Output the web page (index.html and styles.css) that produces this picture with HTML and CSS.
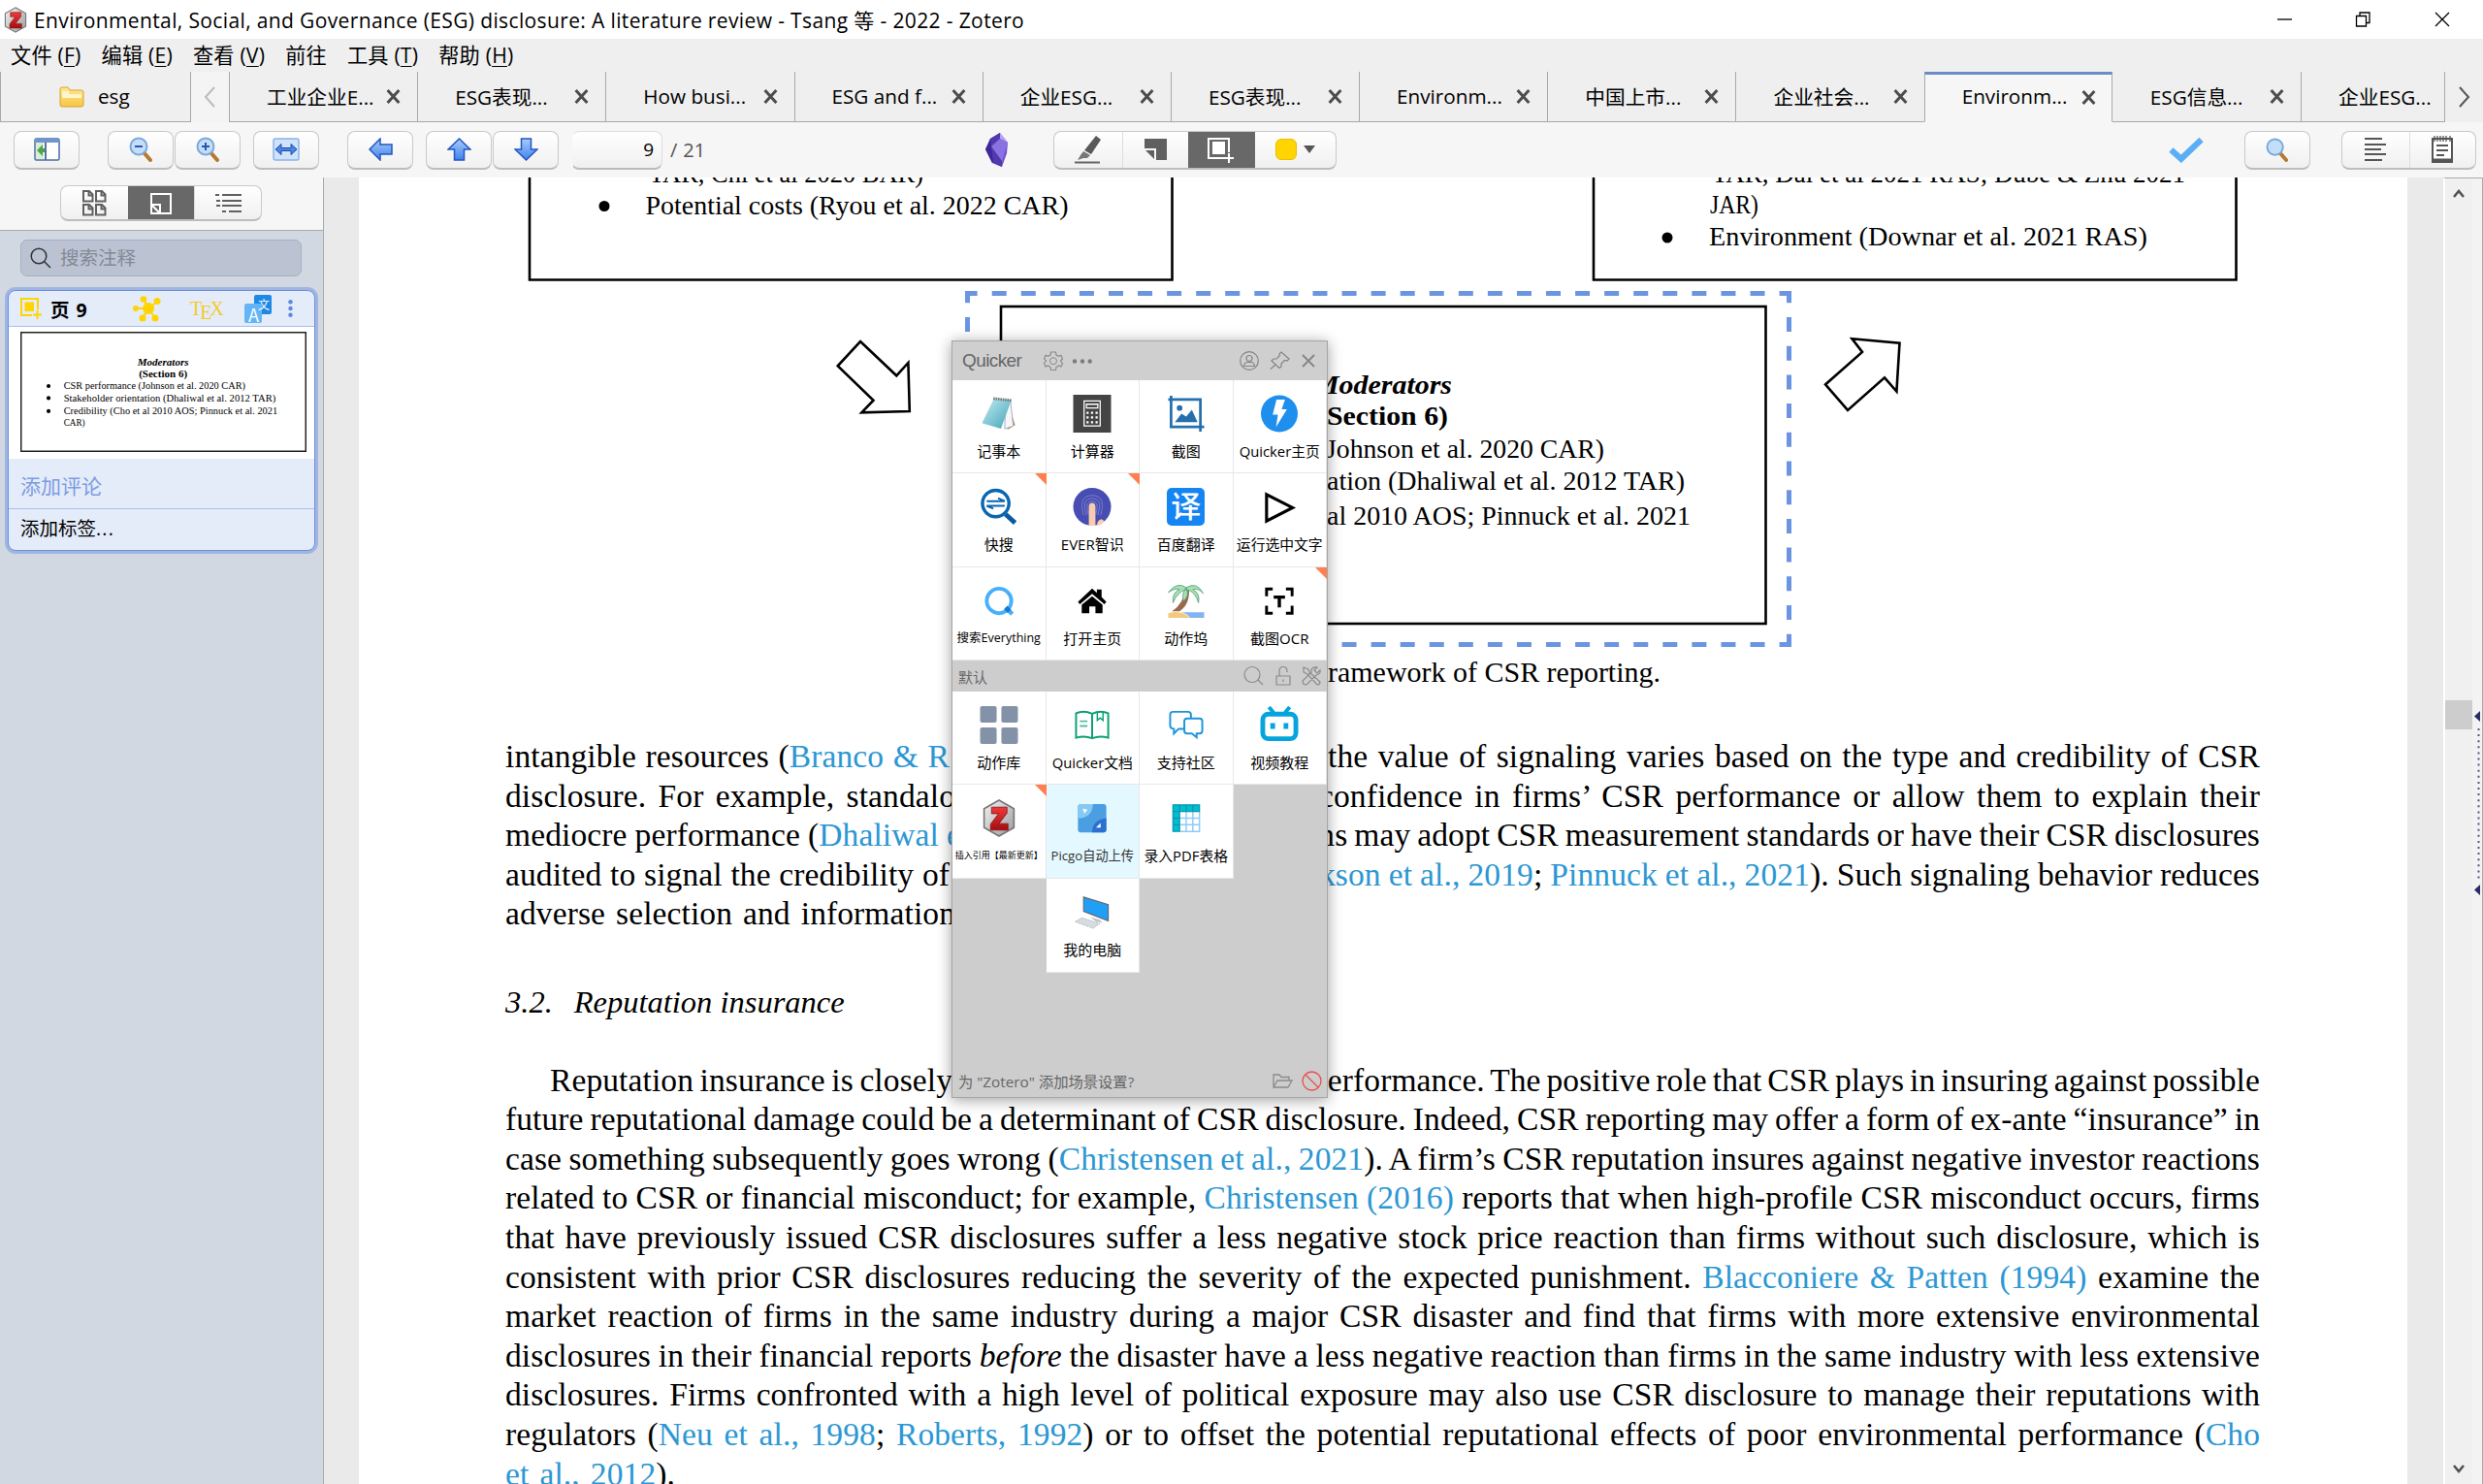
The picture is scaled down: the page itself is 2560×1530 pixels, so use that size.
FILE: index.html
```
<!DOCTYPE html>
<html lang="zh-CN">
<head>
<meta charset="utf-8">
<title>Zotero</title>
<link rel="stylesheet" href="styles.css">
</head>
<body>
<svg class="defs" width="0" height="0">
  <defs>
    <linearGradient id="blue" x1="0" y1="0" x2="0" y2="1"><stop offset="0" stop-color="#a9cdfb"/><stop offset="1" stop-color="#3f82ea"/></linearGradient>
    <linearGradient id="red" x1="0" y1="0" x2="0" y2="1"><stop offset="0" stop-color="#ee3a3a"/><stop offset="1" stop-color="#a30d12"/></linearGradient>
    <linearGradient id="silver" x1="0" y1="0" x2="1" y2="1"><stop offset="0" stop-color="#f4f4f4"/><stop offset="1" stop-color="#9b9b9b"/></linearGradient>
    <linearGradient id="folder" x1="0" y1="0" x2="0" y2="1"><stop offset="0" stop-color="#ffe98f"/><stop offset="1" stop-color="#f6c544"/></linearGradient>
    <linearGradient id="pad" x1="0" y1="0" x2="1" y2="1"><stop offset="0" stop-color="#c9eef3"/><stop offset="1" stop-color="#3fa3b8"/></linearGradient>
    <symbol id="x" viewBox="0 0 14 14"><path d="M1.500 1 12.500 13M12.500 1 1.500 13" stroke="#4c4c4c" stroke-width="2.800" fill="none"/></symbol>
    <symbol id="z" viewBox="0 0 34 38"><path d="M17 1 32 9.500V28.500L17 37 2 28.500V9.500Z" fill="url(#silver)" stroke="#777" stroke-width="1.600"/><path d="M9.500 8H25V14L17 24.500H26V31H8.500V25L16.500 14.500H9.500Z" fill="url(#red)" stroke="#8d1014" stroke-width=".8"/></symbol>
    <symbol id="lens" viewBox="0 0 26 26"><path d="M15.500 16 22.500 24" stroke="#b87830" stroke-width="4" stroke-linecap="round"/><circle cx="10.500" cy="10" r="8.500" fill="#c4def8" stroke="#7ba7dd" stroke-width="2"/></symbol>
    <symbol id="glass" viewBox="0 0 22 22"><circle cx="9" cy="9" r="7.800" fill="none" stroke="currentColor" stroke-width="1.500"/><path d="M14.500 14.500 21 21" stroke="currentColor" stroke-width="1.500"/></symbol>
  </defs>
</svg>

<header class="titlebar">
  <svg class="app" viewBox="0 0 34 38"><use href="#z"/></svg>
  <span class="window-title">Environmental, Social, and Governance (ESG) disclosure: A literature review - Tsang 等 - 2022 - Zotero</span>
  <svg class="winbtns" viewBox="0 0 180 16" fill="none" stroke="#000" stroke-width="1.300"><path d="M1 8H16"/><path d="M82.500 4.500H92.500V15H82.500ZM86 4V1H96V11.500H93"/><path d="M164 1 178 15M178 1 164 15"/></svg>
</header>
<nav class="menubar"><span>文件 (<u>F</u>)</span><span>编辑 (<u>E</u>)</span><span>查看 (<u>V</u>)</span><span>前往</span><span>工具 (<u>T</u>)</span><span>帮助 (<u>H</u>)</span></nav>

<div class="tabs">
  <div class="tab home"><svg width="26" height="22" viewBox="0 0 26 22"><path d="M1 3Q1 1 3 1H9L11 4H23Q25 4 25 6V19Q25 21 23 21H3Q1 21 1 19Z" fill="url(#folder)" stroke="#d9a431"/><path d="M3 5H10V8H23V12H3Z" fill="#fff6cc"/></svg><span>esg</span></div>
  <div class="scroll left"><svg width="12" height="22" viewBox="0 0 12 22"><path d="M11 1 2 11 11 21" fill="none" stroke="#bbb" stroke-width="2"/></svg></div>
  <div class="tab"><span>工业企业E...</span><svg class="x"><use href="#x"/></svg></div>
  <div class="tab"><span>ESG表现...</span><svg class="x"><use href="#x"/></svg></div>
  <div class="tab"><span>How busi...</span><svg class="x"><use href="#x"/></svg></div>
  <div class="tab"><span>ESG and f...</span><svg class="x"><use href="#x"/></svg></div>
  <div class="tab"><span>企业ESG...</span><svg class="x"><use href="#x"/></svg></div>
  <div class="tab"><span>ESG表现...</span><svg class="x"><use href="#x"/></svg></div>
  <div class="tab"><span>Environm...</span><svg class="x"><use href="#x"/></svg></div>
  <div class="tab"><span>中国上市...</span><svg class="x"><use href="#x"/></svg></div>
  <div class="tab"><span>企业社会...</span><svg class="x"><use href="#x"/></svg></div>
  <div class="tab active"><span>Environm...</span><svg class="x"><use href="#x"/></svg></div>
  <div class="tab"><span>ESG信息...</span><svg class="x"><use href="#x"/></svg></div>
  <div class="tab last"><span>企业ESG...</span></div>
  <div class="scroll right"><svg width="12" height="22" viewBox="0 0 12 22"><path d="M1 1 10 11 1 21" fill="none" stroke="#555" stroke-width="2"/></svg></div>
</div>

<div class="toolbar">
  <div class="btn"><svg width="27" height="24" viewBox="0 0 27 24"><rect x="1" y="1" width="25" height="22" rx="1.500" fill="#fff" stroke="#4a6fa5" stroke-width="1.500"/><path d="M1 1H26V5H1Z" fill="#6f95cc"/><path d="M2 5H10V22H2Z" fill="#dcebd6"/><path d="M12 5V23" stroke="#53749f" stroke-width="2"/><path d="M3 13 9 7V11H11V15H9V19Z" fill="#4aa64a"/></svg></div>
  <div class="btn gap29"><svg width="27" height="26" viewBox="0 0 26 26"><use href="#lens"/><path d="M6.500 10H14.500" stroke="#2b55b5" stroke-width="2"/></svg></div>
  <div class="btn gap1"><svg width="27" height="26" viewBox="0 0 26 26"><use href="#lens"/><path d="M6.500 10H14.500M10.500 6V14" stroke="#2b55b5" stroke-width="2"/></svg></div>
  <div class="btn gap13"><svg width="28" height="24" viewBox="0 0 28 24"><rect x="1" y="1" width="26" height="22" rx="2" fill="#cfe3fb" stroke="#8cb4e8" stroke-width="1.500"/><path d="M3 12 9 6.500V10.500H19V6.500L25 12 19 17.500V13.500H9V17.500Z" fill="#4a86e0" stroke="#1f4cad"/></svg></div>
  <div class="btn gap29"><svg width="25" height="24" viewBox="0 0 25 24"><path d="M1 12 12 1V7H24V17H12V23Z" fill="url(#blue)" stroke="#2355c4" stroke-width="1.500"/></svg></div>
  <div class="btn gap13"><svg width="25" height="24" viewBox="0 0 25 24"><path d="M12.500 1 24 12H17.500V23H7.500V12H1Z" fill="url(#blue)" stroke="#2355c4" stroke-width="1.500"/></svg></div>
  <div class="btn gap1"><svg width="25" height="24" viewBox="0 0 25 24"><path d="M12.500 23 24 12H17.500V1H7.500V12H1Z" fill="url(#blue)" stroke="#2355c4" stroke-width="1.500"/></svg></div>
  <div class="page-input">9</div><span class="total">/ 21</span>
  <svg class="obsidian" viewBox="0 0 23 35"><path d="M15 0 5 6 0 17 7 31 17 35 22 21 23 10Z" fill="#6c50cf"/><path d="M15 0 5 6 0 17 7 31 9 30 6 14Z" fill="#3f2797"/><path d="M15 0 15 6 6 14 5 7Z" fill="#523aae"/><path d="M15 0 23 10 15 6Z" fill="#b7a4f2"/><path d="M6 14 15 6 23 10 17 30Z" fill="#8b72e2"/><path d="M6 14 8 31 17 35 17 29Z" fill="#503aad"/></svg>
  <div class="group tools">
    <div><svg width="29" height="29" viewBox="0 0 29 29"><path d="M1 27.500H27" stroke="#666" stroke-width="2"/><path d="M23 0 28 4 18 19 11 15Z" fill="#595959"/><path d="M10 16 17 20 14 23H10L4 25 7 20Z" fill="#777"/></svg></div>
    <div><svg width="23" height="22" viewBox="0 0 23 22"><path d="M0 0H23V22H12V10H0Z" fill="#606060"/><path d="M1 12H10V21Z" fill="#606060"/></svg></div>
    <div class="dark"><svg width="28" height="26" viewBox="0 0 28 26"><path d="M22 15V1H1V21H18" fill="none" stroke="#fff" stroke-width="2"/><rect x="5" y="4" width="13" height="13" fill="#fff"/><path d="M22 16V26M17 21H27" stroke="#fff" stroke-width="2"/></svg></div>
    <div class="color"><i></i><b></b></div>
  </div>
  <svg class="check" viewBox="0 0 34 26"><path d="M2 13 12 22 32 3" fill="none" stroke="#5aaef5" stroke-width="6"/></svg>
  <div class="btn find"><svg width="26" height="25" viewBox="0 0 26 26"><use href="#lens"/></svg></div>
  <div class="group side">
    <div><svg width="22" height="24" viewBox="0 0 22 24"><path d="M0 1H18M0 7H22M0 12H17M0 17H22M0 23H18" stroke="#555" stroke-width="1.800"/></svg></div>
    <div><svg width="24" height="28" viewBox="0 0 24 28"><path d="M2 3H22V27H2Z" fill="#fff" stroke="#555" stroke-width="2"/><path d="M2 25H22" stroke="#555" stroke-width="3"/><path d="M4 0V6M7 0V6M10 0V6M13 0V6M16 0V6M20 0V6" stroke="#555" stroke-width="1.300"/><path d="M6 10H18M6 15H18M6 20H14" stroke="#555" stroke-width="1.800"/></svg></div>
  </div>
</div>

<div class="main">
  <aside class="sidebar">
    <div class="side-head"><div class="group views">
      <div><svg width="25" height="27" viewBox="0 0 25 27" fill="none" stroke="#606060" stroke-width="2"><path id="pg" d="M1 1H7L10.500 4.500V11.500H1ZM6.500 1.500V5.500H10"/><use href="#pg" x="13"/><use href="#pg" y="14"/><use href="#pg" x="13" y="14"/></svg></div>
      <div class="dark"><svg width="22" height="22" viewBox="0 0 22 22"><path d="M1 1H21V21H1Z" fill="none" stroke="#fff" stroke-width="2"/><path d="M2 12H10V20M2 13 9 20" fill="none" stroke="#fff" stroke-width="2"/></svg></div>
      <div><svg width="27" height="19" viewBox="0 0 27 19"><path d="M7 1H27M7 7H27M7 12H27M14 18H27M0 1H4M1 7H5M1 12H5M7 18H11" stroke="#606060" stroke-width="1.800"/></svg></div>
    </div></div>
    <div class="search"><svg width="22" height="22"><use href="#glass"/></svg><span>搜索注释</span></div>
    <div class="card">
      <div class="card-head">
        <svg width="22" height="22" viewBox="0 0 22 22"><path d="M18 12V1H1V18H12" fill="none" stroke="#ffd400" stroke-width="2"/><path d="M4.500 4.500H14V14H4.500Z" fill="#ffd400"/><path d="M17.500 13V22M13 17.500H22" stroke="#ffd400" stroke-width="2"/></svg>
        <strong>页 <em>9</em></strong>
        <svg class="net" width="29" height="27" viewBox="0 0 29 27"><path d="M16 13 4 13M16 13 11 3M16 13 25 6M16 13 10 23M16 13 23 23" stroke="#ffd400" stroke-width="1.800"/><g fill="#ffd400"><circle cx="16" cy="13" r="6"/><circle cx="3" cy="13" r="3"/><circle cx="11" cy="3.500" r="3.300"/><circle cx="25" cy="5.500" r="3.500"/><circle cx="10" cy="23" r="3.500"/><circle cx="23" cy="23" r="3.500"/></g></svg>
        <span class="tex">T<i>E</i>X</span>
        <span class="translate"><svg width="28" height="29" viewBox="0 0 28 29"><rect x="10" width="18" height="20" rx="2" fill="#1e88e5"/><rect y="9" width="18" height="20" rx="2" fill="#64b5f6"/></svg><b>文</b><i>A</i></span>
        <svg class="dots" width="5" height="18" viewBox="0 0 5 18" fill="#5c87de"><circle cx="2.500" cy="2.300" r="2.200"/><circle cx="2.500" cy="9" r="2.200"/><circle cx="2.500" cy="15.700" r="2.200"/></svg>
      </div>
      <div class="thumb"><svg viewBox="1030 314 792 330" preserveAspectRatio="none">
        <rect x="1032" y="316" width="788" height="326" fill="#fff" stroke="#222" stroke-width="4"/>
        <g class="figtext"><text x="1354" y="406" class="bi" textLength="142" lengthAdjust="spacingAndGlyphs">Moderators</text><text x="1358" y="438" class="bo" textLength="134" lengthAdjust="spacingAndGlyphs">(Section 6)</text><text x="1150" y="472" textLength="503" lengthAdjust="spacingAndGlyphs">CSR performance (Johnson et al. 2020 CAR)</text><text x="1150" y="505" textLength="587" lengthAdjust="spacingAndGlyphs">Stakeholder orientation (Dhaliwal et al. 2012 TAR)</text><text x="1150" y="541" textLength="592" lengthAdjust="spacingAndGlyphs">Credibility (Cho et al 2010 AOS; Pinnuck et al. 2021</text><text x="1150" y="573" textLength="59" lengthAdjust="spacingAndGlyphs">CAR)</text></g>
        <circle cx="1108" cy="463" r="5.500"/><circle cx="1108" cy="496" r="5.500"/><circle cx="1108" cy="532" r="5.500"/>
      </svg></div>
      <div class="comment">添加评论</div>
      <div class="tag">添加标签<span>...</span></div>
    </div>
  </aside>

  <main class="viewer">
    <article class="page">
      <svg class="figure" width="2112" height="577" viewBox="370 183 2112 577">
        <g fill="none" stroke="#000" stroke-width="2.600"><path d="M546 180V288.500H1208.500V180M1643 180V288.500H2305.500V180"/><rect x="1032" y="316" width="788.500" height="327"/><path d="M887 352 924.300 387.300 936.400 374 937.800 424 888.400 425.300 900.500 412.700 863.700 377.300Z"/><path d="M1909.500 349.300 1958.500 353.600 1955.400 403.600 1943 389.300 1905 422.900 1882 396.400 1920 362.900Z"/></g>
        <g class="figtext">
          <text x="669" y="188" textLength="283" lengthAdjust="spacingAndGlyphs">TAR, Chi et al 2020 BAR)</text>
          <text x="665.500" y="220.700" textLength="436" lengthAdjust="spacingAndGlyphs">Potential costs (Ryou et al. 2022 CAR)</text>
          <text x="1765" y="188" textLength="488" lengthAdjust="spacingAndGlyphs">TAR, Dai et al 2021 RAS; Dube &amp; Zhu 2021</text>
          <text x="1763" y="220" textLength="50" lengthAdjust="spacingAndGlyphs">JAR)</text>
          <text x="1762" y="253" textLength="452" lengthAdjust="spacingAndGlyphs">Environment (Downar et al. 2021 RAS)</text>
          <text x="1354" y="406" class="bi" textLength="143" lengthAdjust="spacingAndGlyphs">Moderators</text>
          <text x="1358" y="438" class="bo" textLength="135" lengthAdjust="spacingAndGlyphs">(Section 6)</text>
          <text x="1367" y="472" textLength="287" lengthAdjust="spacingAndGlyphs">Johnson et al. 2020 CAR)</text>
          <text x="1368" y="505" textLength="369" lengthAdjust="spacingAndGlyphs">ation (Dhaliwal et al. 2012 TAR)</text>
          <text x="1368" y="541" textLength="375" lengthAdjust="spacingAndGlyphs">al 2010 AOS; Pinnuck et al. 2021</text>
          <text x="1369" y="703" class="cap" textLength="343" lengthAdjust="spacingAndGlyphs">ramework of CSR reporting.</text>
        </g>
        <ellipse cx="623" cy="212.500" rx="5.500" ry="5.500"/><ellipse cx="1719" cy="245" rx="5.500" ry="5.500"/>
        <g fill="none" stroke="#6b95e2" stroke-width="5"><path d="M995 302.500H1847M995 664.500H1847" stroke-dasharray="12.600 15.100 15 15.070 15 15.070 15 15.070 15 15.070 15 15.070 15 15.070 15 15.070 15 15.070 15 15.070 15 15.070 15 15.070 15 15.070 15 15.070 15 15.070 15 15.070 15 15.070 15 15.070 15 15.070 15 15.070 15 15.070 15 15.070 15 15.070 15 15.070 15 15.070 15 15.070 15 15.070 15 15.070 15 15.070"/><path d="M997.500 300V312.300M1844.500 300V312.300"/><path d="M997.500 327V667M1844.500 327V667" stroke-dasharray="15 14.700"/></g>
      </svg>
      <section class="body">
        <div class="line"><span class="w457">intangible resources (<a>Branco &amp; R</a></span><span class="r961">the value of signaling varies based on the type and credibility of CSR</span></div>
        <div class="line"><span class="w463">disclosure. For example, standalo</span><span class="r970">confidence in firms’ CSR performance or allow them to explain their</span></div>
        <div class="line"><span class="w470">mediocre performance (<a>Dhaliwal e</a></span><span class="r980">ms may adopt CSR measurement standards or have their CSR disclosures</span></div>
        <div class="line"><span class="w457">audited to signal the credibility of</span><span class="r967"><a>kson et al., 2019</a>; <a>Pinnuck et al., 2021</a>). Such signaling behavior reduces</span></div>
        <div class="line"><span class="w463">adverse selection and information</span></div>
        <h2><b>3.2.</b><span>Reputation insurance</span></h2>
        <div class="line"><span class="w415">Reputation insurance is closely</span><span class="r978">performance. The positive role that CSR plays in insuring against possible</span></div>
        <div class="line"><span>future reputational damage could be a determinant of CSR disclosure. Indeed, CSR reporting may offer a form of ex-ante “insurance” in</span></div>
        <div class="line"><span>case something subsequently goes wrong (<a>Christensen et al., 2021</a>). A firm’s CSR reputation insures against negative investor reactions</span></div>
        <div class="line"><span>related to CSR or financial misconduct; for example, <a>Christensen (2016)</a> reports that when high-profile CSR misconduct occurs, firms</span></div>
        <div class="line"><span>that have previously issued CSR disclosures suffer a less negative stock price reaction than firms without such disclosure, which is</span></div>
        <div class="line"><span>consistent with prior CSR disclosures reducing the severity of the expected punishment. <a>Blacconiere &amp; Patten (1994)</a> examine the</span></div>
        <div class="line"><span>market reaction of firms in the same industry during a major CSR disaster and find that firms with more extensive environmental</span></div>
        <div class="line"><span>disclosures in their financial reports <em>before</em> the disaster have a less negative reaction than firms in the same industry with less extensive</span></div>
        <div class="line"><span>disclosures. Firms confronted with a high level of political exposure may also use CSR disclosure to manage their reputations with</span></div>
        <div class="line"><span>regulators (<a>Neu et al., 1998</a>; <a>Roberts, 1992</a>) or to offset the potential reputational effects of poor environmental performance (<a>Cho</a></span></div>
        <div class="line"><span class="w175"><a>et al., 2012</a>).</span></div>
      </section>
    </article>
    <div class="scrollbar"><svg width="12" height="9" viewBox="0 0 12 9"><path d="M1 8 6 2 11 8" fill="none" stroke="#505050" stroke-width="2.500"/></svg><i></i><svg width="12" height="9" viewBox="0 0 12 9"><path d="M1 1 6 7 11 1" fill="none" stroke="#505050" stroke-width="2.500"/></svg></div>
    <div class="splitter"><svg width="7" height="190" viewBox="0 0 7 190"><path d="M6 0V11L0 5.500ZM6 179V190L0 184.500Z" fill="#2b2b66"/><path d="M4.500 18V176" stroke="#55558a" stroke-width="2" stroke-dasharray="2 4.100"/></svg></div>
  </main>
</div>

<div class="quicker">
  <div class="q-head"><span>Quicker</span>
    <svg width="50" height="20" viewBox="0 0 50 20"><path d="M7.500 1H12.500L13 4 15.500 5.300 18 4.300 19.500 8 17.500 10 19.500 12.500 18 16 15.500 15 13 16.500 12.500 19.500H7.500L7 16.500 4.500 15 2 16 .5 12.500 2.500 10 .5 8 2 4.300 4.500 5.300 7 4Z" fill="none" stroke="#8a8a8a" stroke-width="1.200"/><circle cx="10" cy="10.200" r="3.500" fill="none" stroke="#8a8a8a"/><g fill="#7c7c7c"><circle cx="32" cy="10.500" r="2.200"/><circle cx="40" cy="10.500" r="2.200"/><circle cx="47.700" cy="10.500" r="2.200"/></g></svg>
    <svg class="push" width="78" height="20" viewBox="0 0 78 20" fill="none" stroke="#858585" stroke-width="1.200"><circle cx="10" cy="10" r="9.300"/><circle cx="10" cy="7.500" r="3"/><path d="M4.500 15.500Q5 11.500 8 11.500H12Q15 11.500 15.500 15.500ZM43 1 51 8 49 10 46.500 9.500 43 13 43 16 41 17.500 33 10 35 8 38 8 41.500 4.500 41 3ZM37 14 32 18.500"/><path d="M65 4 77 16M77 4 65 16" stroke-width="1.800"/></svg>
  </div>
  <div class="grid">
    <div class="cell"><svg viewBox="0 0 40 40"><path d="M28 3 37 32 29 37Z" fill="#b98c45"/><path d="M32 5 35 33 26 36 27 8Z" fill="#f5f7f8" stroke="#aac"/><path d="M15 3 33 6 22 36 2 30Z" fill="url(#pad)"/><path d="M14 4 33 6" stroke="#777" stroke-width="3" stroke-dasharray="1.500 1"/></svg><span>记事本</span></div>
    <div class="cell"><svg viewBox="0 0 40 40"><path d="M0 0H40V40H0Z" fill="#444"/><path d="M11.500 6.500H28.500V33H11.500Z" fill="none" stroke="#fff" stroke-width="1.300"/><path d="M14 10H26V14H14Z" fill="none" stroke="#fff" stroke-width="1.300"/><path d="M14 19H27M14 24H27M14 29H27" stroke="#fff" stroke-width="2.300" stroke-dasharray="2.300 2.500"/></svg><span>计算器</span></div>
    <div class="cell"><svg viewBox="0 0 40 40"><path d="M4 1V34H39M1 5H35V39" fill="none" stroke="#256fad" stroke-width="2.800"/><circle cx="13" cy="14" r="3" fill="#256fad"/><path d="M8 29 15 20 20 23 26 16 32 29Z" fill="#256fad"/></svg><span>截图</span></div>
    <div class="cell"><svg viewBox="0 0 40 40"><circle cx="20" cy="20" r="19.500" fill="#1f8fee"/><path d="M17 5H26L22.500 15.500H28L16.500 34 18.500 21H13Z" fill="#fff"/></svg><span class="q148">Quicker主页</span></div>
    <div class="cell hot"><svg viewBox="0 0 40 40"><circle cx="16.500" cy="16.500" r="14" fill="none" stroke="#0867b2" stroke-width="3.500"/><path d="M27 28 37 37" stroke="#0d59a0" stroke-width="5"/><path d="M7 14H26L19 11M26 19H7L14 22" fill="none" stroke="#0867b2" stroke-width="2"/></svg><span>快搜</span></div>
    <div class="cell hot"><svg viewBox="0 0 40 40"><circle cx="20" cy="20" r="20" fill="#484db2"/><g fill="none" stroke="#7f83cf" stroke-width=".9"><path d="M11 29Q5 8 20 8T29 29M14 29Q8 11 20 11T26 29M16 28Q12 14 20 14T24 28"/></g><path d="M16.500 40V20Q16.500 16 20 16T23.500 20V40ZM25 40Q25 34 30 33L33 35Q30 39 25 40Z" fill="#f9ccb0"/></svg><span>EVER智识</span></div>
    <div class="cell"><div class="yi">译</div><span>百度翻译</span></div>
    <div class="cell"><svg viewBox="0 0 40 40"><path d="M6.500 6V34L34 20Z" fill="none" stroke="#000" stroke-width="3.200" transform="translate(0 1)"/></svg><span class="q148">运行选中文字</span></div>
    <div class="cell"><svg viewBox="0 0 40 40"><circle cx="20" cy="20" r="13" fill="none" stroke="#48b0fb" stroke-width="4"/><path d="M28 28 34 34" stroke="#48b0fb" stroke-width="4.500"/><path d="M27 27 31 31" stroke="#1578d4" stroke-width="5"/></svg><span class="s125">搜索Everything</span></div>
    <div class="cell"><svg viewBox="0 0 40 40"><path d="M20 7 25 11.500V8H30V16L35 21 33 23.500 20 12.500 7 23.500 5 21Z"/><path d="M20 15 31 24V33H23.500V26H17V33H9V24Z"/></svg><span>打开主页</span></div>
    <div class="cell"><svg viewBox="0 0 40 40"><path d="M1 38V33Q15 29 24 38Z" fill="#f3ca7b"/><path d="M15 32H39V38H24Q22 34 15 32Z" fill="#83b4ef"/><path d="M5 31Q18 22 18 9L23 7Q24 24 13 31Z" fill="#9a694b"/><path d="M20 6Q11-1 1 11Q9 6 13 8Q5 11 6 22Q11 10 20 8Q29 9 33 22Q35 12 27 8Q32 6 38 12Q31-1 20 6Q15 12 17 20Q24 15 20 6Z" fill="#a8e0b4" stroke="#4b9b74" stroke-width=".8"/></svg><span>动作坞</span></div>
    <div class="cell hot"><svg viewBox="0 0 40 40" fill="none" stroke="#000" stroke-width="3"><path d="M13 7.500H6.500V15M27 7.500H33.500V15M13 33H6.500V25M27 33H33.500V25"/><path d="M14 16H26M20 16V27" stroke-width="3.500"/></svg><span>截图OCR</span></div>
  </div>
  <div class="q-bar"><span>默认</span>
    <svg width="82" height="22" viewBox="0 0 82 22" fill="none" stroke="#8b8b8b" stroke-width="1.200"><circle cx="9" cy="9.500" r="8"/><path d="M15 15 20 20M34 11H48V20H34ZM37 11V6Q37 1.500 41 1.500T45 6V7M41 14.500V17"/><path d="M62 2 67 4 68 7 79 17Q79 20 76 20L66 9 62 7ZM79 5 76 8 73 5 76 2Q71 1 70 5V7L61 16Q61 20 65 20L75 10Q80 9 79 5Z"/></svg></div>
  <div class="grid">
    <div class="cell"><svg viewBox="0 0 40 40" fill="#8492a8"><rect width="17.500" height="17.500" rx="2"/><rect x="22.500" width="17.500" height="17.500" rx="2"/><rect y="22.500" width="17.500" height="17.500" rx="2"/><rect x="22.500" y="22.500" width="17.500" height="17.500" rx="2"/></svg><span>动作库</span></div>
    <div class="cell"><svg viewBox="0 0 40 40" fill="none" stroke="#0c9f74" stroke-width="2"><path d="M20 34V8Q11 4 3 7.500V33.500Q12 31 20 34Q28 31 37 33.500V7.500Q29 4 20 8"/><path d="M7 16H15M7 21H15" stroke="#56bfa0"/><path d="M25.500 6V15L28.500 12.500 31.500 15V6" stroke-width="1.500"/></svg><span class="q148">Quicker文档</span></div>
    <div class="cell"><svg viewBox="0 0 40 40" fill="none" stroke="#1c95d9" stroke-width="2"><path d="M18 24H12L7 29V24Q3 24 3 20V9Q3 6 6 6H22Q25 6 25 9V13"/><path d="M21 13H34Q37 13 37 16V26Q37 29 34 29H31V33L26 29H21Q18 29 18 26V16Q18 13 21 13Z"/></svg><span>支持社区</span></div>
    <div class="cell"><svg viewBox="0 0 40 40"><path d="M9 1 14 7M31 1 26 7" stroke="#06a4dc" stroke-width="4"/><rect x="2.500" y="8.500" width="35" height="26" rx="6" fill="none" stroke="#06a4dc" stroke-width="5"/><path d="M13 18V24M27 18V24" stroke="#06a4dc" stroke-width="5"/></svg><span>视频教程</span></div>
    <div class="cell hot"><svg viewBox="0 0 34 38"><use href="#z"/></svg><span class="s9">插入引用【最新更新】</span></div>
    <div class="cell picgo"><svg viewBox="0 0 40 40"><rect x="5" y="5" width="30" height="30" rx="3" fill="#4a9ee1"/><path d="M5 20Q20 20 21 5H8Q5 5 5 8Z" fill="#86caf3"/><path d="M20 35Q20 22 35 20V32Q35 35 32 35Z" fill="#2b6fd0"/><path d="M10 10 15 11 12 15ZM29 25V30H24Z" fill="#fff"/></svg><span class="s132">Picgo自动上传</span></div>
    <div class="cell"><svg viewBox="0 0 40 40"><path d="M6 6H34V34H6Z" fill="#fff"/><path d="M6 6H34V13H13V34H6Z" fill="#00bcd4"/><path d="M13 20H34M13 27H34M20 13V34M27 13V34M34 13V34H13" stroke="#90caf9" stroke-width="1.500" fill="none"/><path d="M6 6H34V13H6ZM6 13V34H13V6M20 6V13M27 6V13M6 20H13M6 27H13" stroke="#0898a8" stroke-width="1.300" fill="none"/></svg><span class="q148">录入PDF表格</span></div>
    <div class="empty"></div><div class="empty"></div>
    <div class="cell"><svg viewBox="0 0 40 40"><path d="M11 4 37 12V29L11 19Z" fill="#1fa0f6" stroke="#667" stroke-width="1.200"/><path d="M18 25 28 28 31 31 24 30Z" fill="#bcc4cc"/><path d="M2 30 9 26 28 32 21 37Z" fill="#d7dce0" stroke="#a1a8ae" stroke-width=".8" stroke-dasharray="2 1"/></svg><span>我的电脑</span></div>
  </div>
  <div class="q-foot"><span>为 "Zotero" 添加场景设置?</span>
    <svg width="51" height="21" viewBox="0 0 51 21" fill="none" stroke-width="1.300"><path d="M1 16V4H7L9 6.500H17V10M1 17 5 10H20L16 17Z" stroke="#8b8b8b"/><circle cx="40.500" cy="10.500" r="9.500" stroke="#e8504d"/><path d="M34 4 47 17" stroke="#e8504d"/></svg></div>
</div>
</body>
</html>
```
FILE: styles.css
```
* { box-sizing: border-box; }
body { margin: 0; width: 2560px; height: 1530px; overflow: hidden; position: relative; display: flex; flex-direction: column; background: #f6f6f6; color: #000; font: 21px "Open Sans", "Noto Sans CJK SC", sans-serif; }
svg { display: block; flex: none; }
.defs { position: absolute; }
.titlebar { height: 40px; flex: none; background: #fff; display: flex; align-items: center; padding-left: 4px; font-size: 20px; }
.app { width: 24px; height: 27px; }
.window-title { margin-left: 7px; white-space: nowrap; font-size: 21px; letter-spacing: .37px; }
.winbtns { width: 180px; height: 16px; margin-left: auto; margin-right: 33px; }
.menubar { height: 34px; flex: none; background: #efefef; display: flex; align-items: center; gap: 21px; padding: 0 0 4px 11px; font-size: 21.200px; white-space: nowrap; letter-spacing: .2px; }
.menubar u { text-underline-offset: 3px; text-decoration-thickness: 1px; }
.tabs { height: 52px; flex: none; display: flex; background: #efefef; overflow: hidden; }
.tab { width: 194.200px; flex: none; border-left: 1px solid #a9a9a9; border-bottom: 1px solid #a9a9a9; display: flex; align-items: center; padding: 0 17px 0 38px; font-size: 20.700px; white-space: nowrap; }
.tab span { padding-bottom: 2px; }
.tab .x { width: 15px; height: 15px; margin-left: auto; }
.tab.home { width: 196px; padding-left: 60px; gap: 14px; }
.tab.last { width: 149px; padding-right: 0; border-right: 1px solid #a9a9a9; }
.tab.active { background: #f6f6f6; border-bottom-color: #f6f6f6; border-top: 3px solid #6a8cc9; padding-bottom: 2px; border-right: 1px solid #a9a9a9; padding-right: 16px; }
.tab.active + .tab { border-left: 0; padding-left: 39px; }
.scroll { display: flex; align-items: center; justify-content: center; border-left: 1px solid #a9a9a9; }
.scroll.left { width: 41px; background: #f4f4f4; }
.scroll.right { width: 40px; border: 0; }
.toolbar { height: 57px; flex: none; display: flex; align-items: center; padding: 0 7px 0 14px; }
.btn, .page-input, .group { height: 40px; border: 1px solid #c9c9c9; border-bottom: 2px solid #bdbdbd; border-radius: 8px; background: linear-gradient(#fff, #f0f0f0); }
.btn { width: 68px; display: flex; align-items: center; justify-content: center; flex: none; }
.gap29 { margin-left: 29px; } .gap13 { margin-left: 13px; } .gap1 { margin-left: 1px; }
.page-input { width: 94px; margin-left: 13px; padding-right: 8px; display: flex; align-items: center; justify-content: flex-end; font-size: 19px; border-color: #ddd #ddd #bbb #f6f6f6; }
.total { margin-left: 8px; color: #555; width: 37px; font-size: 20px; white-space: nowrap; letter-spacing: .3px; }
.obsidian { width: 23px; height: 35px; margin-left: 288px; }
.group { display: flex; overflow: hidden; flex: none; }
.group > div { display: flex; align-items: center; justify-content: center; width: 69px; border-left: 1px solid #ddd; }
.group > div:first-child { border-left: 0; }
.group .dark { background: #686868; margin: -1px 0 -2px; border: 0; }
.tools { margin-left: 47px; width: 292px; }
.tools > div:first-child { width: 70px; }
.group > .color { width: 84px; gap: 7px; border: 0; }
.color i { width: 22px; height: 22px; border-radius: 6px; background: #ffd400; border: 1px solid #e8bf00; }
.color b { border: 6px solid transparent; border-top: 8px solid #555; border-bottom: 0; }
.check { width: 36px; height: 27px; margin-left: auto; margin-right: 42px; }
.side { margin-left: 32px; width: 139px; }
.main { flex: 1; min-height: 0; display: flex; }
.sidebar { width: 334px; flex: none; border-right: 1px solid #a9a9a9; background: #d2d8e2; }
.side-head { height: 55px; background: #f6f6f6; border-bottom: 1px solid #a9a9a9; padding: 8px 0 0 62px; }
.views { width: 208px; height: 37px; }
.search { width: 290px; height: 38px; margin: 9px 0 0 21px; border: 1px solid #a5afc3; border-radius: 7px; background: #bbc3d2; display: flex; align-items: center; gap: 9px; padding-left: 9px; color: #838a97; font-size: 19.500px; }
.search span { padding-bottom: 3px; }
.search svg { color: #2d3138; }
.card { margin: 14px 0 0 8px; width: 317px; height: 269px; border: 1.500px solid #6b91df; border-radius: 8px; box-shadow: 0 0 0 3px #a0b6e0; background: #e4ebf9; overflow: hidden; }
.card-head { height: 37px; border-bottom: 1px solid #a9c1ef; display: flex; align-items: center; padding-left: 12px; }
.card-head strong { width: 85px; margin-left: 9px; font-size: 19.500px; white-space: nowrap; }
.card-head em { font-style: normal; margin-left: 2px; }
.tex { margin-left: 30px; width: 56px; font: 20px "Liberation Serif", serif; color: #f2cc28; white-space: nowrap; }
.tex i { font-style: normal; position: relative; top: 4px; margin: 0 -2px; }
.translate { position: relative; width: 28px; height: 29px; }
.translate b, .translate i { position: absolute; color: #fff; font: 12px/13px "Noto Sans CJK SC", sans-serif; }
.translate b { left: 14px; top: 3px; } .translate i { left: 4px; top: 11px; font-size: 18px; line-height: 18px; }
.dots { margin-left: 17px; }
.thumb { height: 136px; background: #fff; padding: 5px 0 0 12px; }
.thumb svg { width: 295px; height: 124px; }
.comment { height: 52px; padding-top: 13px; color: #7d9ce0; font-size: 21px; line-height: 30px; border-bottom: 1px solid #a9c1ef; padding-left: 12px; }
.tag { padding: 5px 12px; font-size: 19.500px; line-height: 30px; }
.tag span { letter-spacing: 1.200px; }
.viewer { flex: 1; display: flex; background: #eaeaea; padding-left: 36px; min-width: 0; }
.page { width: 2112px; flex: none; height: 1347px; overflow: hidden; background: #fff; }
.figtext { font: 28px "Liberation Serif", serif; }
.figtext .bi { font-weight: bold; font-style: italic; } .figtext .bo { font-weight: bold; } .figtext .cap { font-size: 30px; }
.body { width: 1809px; margin-left: 151px; font-family: "Liberation Serif", serif; font-size: 33.500px; letter-spacing: .1px; word-spacing: -3px; line-height: 40.600px; }
.line { display: flex; justify-content: space-between; height: 40.600px; }
.line span { display: block; width: 100%; white-space: nowrap; text-align: justify; text-align-last: justify; }
.line a { color: #2c97d3; }
.line .w457 { width: 458px; } .line .w463 { width: 464px; } .line .w470 { width: 470px; } .line .w415 { width: 415px; margin-left: 46px; } .line .w175 { width: 175px; }
.line .r961 { width: 961px; } .line .r970 { width: 970px; } .line .r980 { width: 980px; } .line .r967 { width: 970px; } .line .r978 { width: 978px; }
.body h2 { display: flex; gap: 22px; font-size: 32.500px; font-weight: normal; font-style: italic; margin: 50px 0 40px; line-height: 40.600px; letter-spacing: 0; word-spacing: 0; }
.body h2 b { font-weight: normal; }
.scrollbar { margin-left: 37px; width: 30px; border-top: 1px solid #aaa; border-left: 2px solid #fff; background: #f0f0f0; display: flex; flex-direction: column; align-items: center; padding: 11px 0; }
.scrollbar i { width: 28px; height: 30px; background: #cdcdcd; margin: 518px 0 auto; }
.splitter { flex: 1; border-top: 1px solid #aaa; border-right: 1px solid #aaa; background: #f3f3f3; padding: 549px 0 0 2px; }
.quicker { position: absolute; left: 981px; top: 351px; width: 388px; height: 781px; border: 1px solid #a5a5a5; background: #cdcdcd; box-shadow: 0 2px 14px rgba(0,0,0,.38); color: #666; font-size: 15px; display: flex; flex-direction: column; }
.q-head { height: 39.500px; flex: none; display: flex; align-items: center; padding: 0 12px 0 10px; font: 19px "Liberation Sans", sans-serif; background: #cfcfcf; }
.q-head > span { width: 84px; letter-spacing: -.6px; }
.push { margin-left: auto; }
.grid { display: grid; grid-template-columns: repeat(4, 96.500px); grid-auto-rows: 96.600px; }
.cell { position: relative; background: #fff; border-right: 1px solid #e7e7e7; border-bottom: 1px solid #e7e7e7; padding-top: 15px; display: flex; flex-direction: column; align-items: center; color: #000; }
.cell svg { width: 40px; height: 39px; }
.cell span { margin-top: 7px; line-height: 24px; white-space: nowrap; font-size: 15px; }
.cell .q148 { font-size: 14.800px; } .cell .s125 { font-size: 12.500px; } .cell .s9 { font-size: 9px; } .cell .s132 { font-size: 13.200px; color: #333; }
.hot::after { content: ""; position: absolute; right: -1px; top: 0; border-top: 12px solid #ff7f50; border-left: 12px solid transparent; }
.picgo { background: #e3f8ff; }
.yi { width: 39px; height: 39px; border-radius: 5px; background: #1685f4; color: #fff; font-size: 31px; line-height: 37px; text-align: center; font-weight: 500; }
.q-bar { height: 31.500px; flex: none; display: flex; align-items: center; justify-content: space-between; padding: 0 4px 0 6px; }
.q-foot { margin-top: auto; height: 34px; display: flex; align-items: center; justify-content: space-between; padding: 0 5px 0 6px; font-size: 15.300px; }
```
